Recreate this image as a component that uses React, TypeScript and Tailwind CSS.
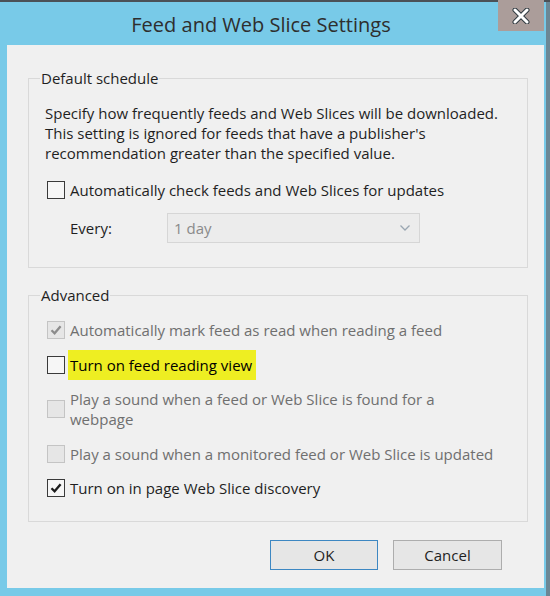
import { ReactNode } from "react";
import { clsx } from "clsx";

type BoxProps = { checked?: boolean; disabled?: boolean };

const CheckBox = ({ checked, disabled }: BoxProps) => (
  <span
    className={clsx(
      "flex shrink-0 items-center justify-center w-[18px] h-[18px] ml-[2px] border",
      disabled ? "border-[#c4c4c4] bg-[#e6e6e6]" : "border-[#3a3a3a] bg-[#f6f6f6]"
    )}
  >
    {checked && (
      <svg width="14" height="14" viewBox="0 0 14 14">
        <path
          d="M2.5 7.2 L5.6 10.3 L11.6 3.2"
          fill="none"
          stroke={disabled ? "#8c8c8c" : "#1c1c1c"}
          strokeWidth="2.3"
        />
      </svg>
    )}
  </span>
);

const Option = ({
  checked,
  disabled,
  children,
}: BoxProps & { children: ReactNode }) => (
  <label className="flex flex-row items-center gap-[5px]">
    <CheckBox checked={checked} disabled={disabled} />
    <span className={disabled ? "text-[#6f6f6f]" : "text-[#1f1f1f]"}>{children}</span>
  </label>
);

const App = () => {
  return (
    <div className="w-[550px] h-[596px] flex flex-col bg-[#6b8795] overflow-hidden font-['Open_Sans',sans-serif] text-[15px] leading-[20px] text-[#1f1f1f]">
      <div className="h-[2px] bg-[#4b5157]" />
      <div className="flex flex-row flex-1">
        <div className="flex flex-col w-[546px] bg-[#78cae8] pl-[7px] pr-[2px] pb-[8px]">
          {/* title bar */}
          <div className="flex flex-row h-[43px] -ml-[7px]">
            <div className="flex-1 flex items-center justify-center pl-[24px] pt-[3px] text-[20px] text-[#2e2e2e]">
              Feed and Web Slice Settings
            </div>
            <button className="w-[46px] h-[31px] -mt-[2px] bg-[#ab9d9a] flex items-center justify-center">
              <svg width="18" height="16" viewBox="0 0 18 16">
                <path
                  d="M3 2 L15 14 M15 2 L3 14"
                  stroke="#2f3a40"
                  strokeWidth="5"
                  strokeLinecap="round"
                />
                <path
                  d="M3 2 L15 14 M15 2 L3 14"
                  stroke="#ffffff"
                  strokeWidth="3"
                  strokeLinecap="round"
                />
              </svg>
            </button>
          </div>

          {/* body */}
          <div className="flex-1 flex flex-col bg-[#f0f0f0] pl-[21px] pr-[16px] pt-[23px]">
            <fieldset className="border border-[#d9d9d9] px-[16px] pt-[15px] pb-[24px]">
              <legend className="-ml-[5px] px-[1px] text-[#1f1f1f]">Default schedule</legend>
              <p>
                Specify how frequently feeds and Web Slices will be downloaded.
                <br />
                This setting is ignored for feeds that have a publisher's
                <br />
                recommendation greater than the specified value.
              </p>
              <div className="mt-[17px]">
                <Option>Automatically check feeds and Web Slices for updates</Option>
              </div>
              <div className="flex flex-row items-center mt-[13px]">
                <span className="w-[122px] pl-[25px]">Every:</span>
                <div className="flex flex-row items-center justify-between w-[253px] h-[30px] border border-[#d6d6d6] bg-[#ececec] pl-[6px] pr-[8px] text-[#8a8a8a]">
                  <span>1 day</span>
                  <svg width="12" height="8" viewBox="0 0 12 8">
                    <path d="M1.5 1.5 L6 6 L10.5 1.5" fill="none" stroke="#9aa6b1" strokeWidth="1.3" />
                  </svg>
                </div>
              </div>
            </fieldset>

            <fieldset className="mt-[17px] border border-[#d9d9d9] px-[16px] pt-[15px] pb-[23px]">
              <legend className="-ml-[5px] px-[1px] text-[#1f1f1f]">Advanced</legend>
              <div className="flex flex-col gap-[14.5px]">
                <Option checked disabled>
                  Automatically mark feed as read when reading a feed
                </Option>
                <label className="flex flex-row items-center gap-[3px]">
                  <CheckBox />
                  <span className="bg-[#eeee22] text-black py-[5px] pl-[2px] pr-[4px] -my-[5px]">
                    Turn on feed reading view
                  </span>
                </label>
                <Option disabled>
                  Play a sound when a feed or Web Slice is found for a
                  <br />
                  webpage
                </Option>
                <Option disabled>Play a sound when a monitored feed or Web Slice is updated</Option>
                <Option checked>Turn on in page Web Slice discovery</Option>
              </div>
            </fieldset>

            <div className="flex flex-row justify-end gap-[15px] mt-[18px] pr-[26px]">
              <button className="w-[108px] h-[30px] border border-[#3d87c2] bg-[#e6e6e6] text-[#1f1f1f]">
                OK
              </button>
              <button className="w-[109px] h-[30px] border border-[#adadad] bg-[#e6e6e6] text-[#1f1f1f]">
                Cancel
              </button>
            </div>
          </div>
        </div>
      </div>
    </div>
  );
};

export default App;
